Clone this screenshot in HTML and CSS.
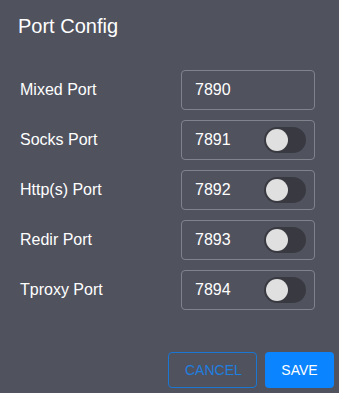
FILE: index.html
```html
<!DOCTYPE html>
<html lang="en">
<head>
  <meta charset="UTF-8">
  <meta name="viewport" content="width=device-width, initial-scale=1.0">
  <title>Port Config</title>
  <link rel="stylesheet" href="styles.css">
</head>
<body>
  <div class="dialog">
    <h2 class="dialog-title">Port Config</h2>

    <div class="dialog-content">
      <div class="row">
        <span class="label">Mixed Port</span>
        <div class="field"><span class="value">7890</span></div>
      </div>
      <div class="row">
        <span class="label">Socks Port</span>
        <div class="field"><span class="value">7891</span><span class="switch"><span class="thumb"></span></span></div>
      </div>
      <div class="row">
        <span class="label">Http(s) Port</span>
        <div class="field"><span class="value">7892</span><span class="switch"><span class="thumb"></span></span></div>
      </div>
      <div class="row">
        <span class="label">Redir Port</span>
        <div class="field"><span class="value">7893</span><span class="switch"><span class="thumb"></span></span></div>
      </div>
      <div class="row">
        <span class="label">Tproxy Port</span>
        <div class="field"><span class="value">7894</span><span class="switch"><span class="thumb"></span></span></div>
      </div>
    </div>

    <div class="dialog-actions">
      <button class="btn btn-outline">Cancel</button>
      <button class="btn btn-primary">Save</button>
    </div>
  </div>
</body>
</html>
```

FILE: styles.css
```css
body {
  margin: 0;
  background-color: #50525e;
  font-family: 'Liberation Sans', Arial, sans-serif;
  color: #ffffff;
}

.dialog {
  height: 393px;
  display: flex;
  flex-direction: column;
}

/* Title */
.dialog-title {
  margin: 0;
  padding: 14px 18px 0;
  font-size: 20px;
  font-weight: normal;
  line-height: 24px;
}

/* Port rows */
.dialog-content {
  padding: 32px 24px 0 20px;
  display: flex;
  flex-direction: column;
  gap: 10px;
}

.row {
  display: flex;
  align-items: center;
  height: 40px;
}

.label {
  width: 161px;
  font-size: 16px;
}

.field {
  box-sizing: border-box;
  width: 134px;
  height: 40px;
  border: 1px solid #80828c;
  border-radius: 4px;
  padding: 0 8px 0 13px;
  display: flex;
  align-items: center;
  justify-content: space-between;
  font-size: 16px;
}

/* Toggle switch */
.switch {
  width: 42px;
  height: 26px;
  border-radius: 13px;
  background-color: #393941;
  display: flex;
  align-items: center;
  padding-left: 2px;
  box-sizing: border-box;
}

.thumb {
  width: 22px;
  height: 22px;
  border-radius: 50%;
  background-color: #e0e0e0;
}

/* Buttons */
.dialog-actions {
  margin-top: auto;
  padding: 0 5px 5px 0;
  display: flex;
  justify-content: flex-end;
  gap: 8px;
}

.btn {
  box-sizing: border-box;
  height: 36px;
  border-radius: 4px;
  font-family: inherit;
  font-size: 14px;
  text-transform: uppercase;
  padding: 0 16px;
}

.btn-outline {
  width: 89px;
  background: transparent;
  border: 1px solid #1976d2;
  color: #1e7fe0;
}

.btn-primary {
  width: 69px;
  background-color: #0a84ff;
  border: none;
  color: #ffffff;
}
```
